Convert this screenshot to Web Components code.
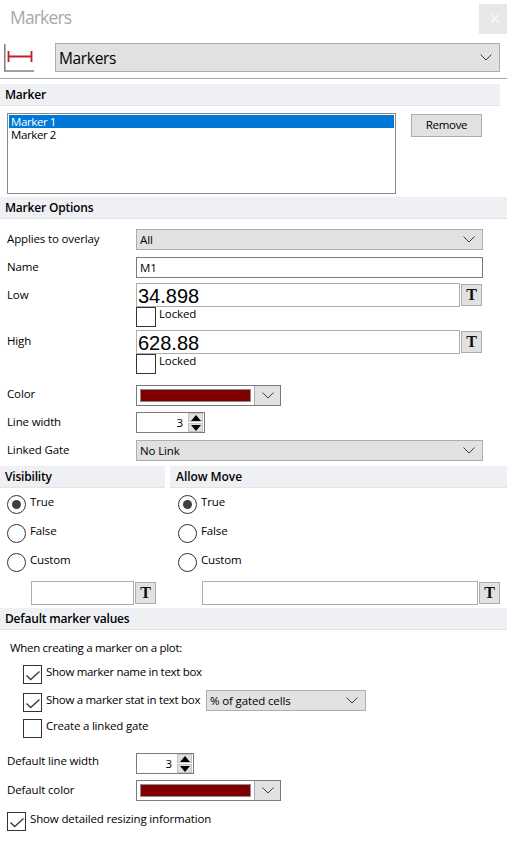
<!DOCTYPE html>
<html>
<head>
<meta charset="utf-8">
<title>Markers</title>
<style>
  html, body { margin: 0; padding: 0; background: #fff; }
  body { font: 11.5px "Open Sans", "Noto Sans", sans-serif; letter-spacing: -0.14px; color: #000; width: 507px; height: 843px; overflow: hidden; }
</style>
</head>
<body>
<markers-panel></markers-panel>

<script>
const chevron = `<svg width="12" height="7" viewBox="0 0 12 7"><path d="M.5 .5 6 6 11.5 .5" fill="none" stroke="#3c3c3c" stroke-width="1"/></svg>`;

class TitleBar extends HTMLElement {
    constructor() {
        super();
        this.attachShadow({ mode: 'open' });
    }
    connectedCallback() {
        this.shadowRoot.innerHTML = `
        <style>
            :host { display: flex; justify-content: space-between; height: 43px; }
            #title { font-size: 17.5px; line-height: 24px; color: #a8a8a8; padding: 5px 0 0 10px; letter-spacing: -0.85px; }
            #close { box-sizing: border-box; width: 28px; height: 30px; padding-left: 4px; margin-top: 4px; background: #e7e7e7; color: #f4f4f4; font: bold 18px/31px "Liberation Sans", sans-serif; text-align: center; }
        </style>
        <div id="title"><slot></slot></div>
        <div id="close">×</div>`;
    }
}

class SectionHead extends HTMLElement {
    constructor() {
        super();
        this.attachShadow({ mode: 'open' });
    }
    connectedCallback() {
        this.shadowRoot.innerHTML = `
        <style>
            :host { display: block; box-sizing: border-box; height: 22px; padding-left: 5px; background: #eff0f4; border-bottom: 1px solid #e3e4e8; font-size: 12px; letter-spacing: -0.2px; font-weight: 600; line-height: 21px; }
        </style>
        <slot></slot>`;
    }
}

class ComboBox extends HTMLElement {
    constructor() {
        super();
        this.attachShadow({ mode: 'open' });
    }
    connectedCallback() {
        this.shadowRoot.innerHTML = `
        <style>
            :host { display: flex; box-sizing: border-box; align-items: center; justify-content: space-between; height: 21px; padding: 0 7px 0 3px; background: #e1e1e1; border: 1px solid #adadad; }
            svg { display: block; }
        </style>
        <span><slot></slot></span>${chevron}`;
    }
}

class TextBox extends HTMLElement {
    constructor() {
        super();
        this.attachShadow({ mode: 'open' });
    }
    connectedCallback() {
        this.shadowRoot.innerHTML = `
        <style>
            :host { display: block; box-sizing: border-box; height: 24px; background: #fff; border: 1px solid #adadad; font: 20px/24px "Liberation Sans", sans-serif; letter-spacing: 0; padding-left: 1px; }
            :host([small]) { height: 21px; border-color: #7a7a7a; font: inherit; line-height: 19px; letter-spacing: inherit; padding-left: 3px; }
        </style>
        <slot></slot>`;
    }
}

class TButton extends HTMLElement {
    constructor() {
        super();
        this.attachShadow({ mode: 'open' });
    }
    connectedCallback() {
        this.shadowRoot.innerHTML = `
        <style>
            :host { display: block; box-sizing: border-box; flex: none; width: 21px; height: 22px; margin: 1px 0 0 1px; background: #e1e1e1; border: 1px solid #adadad; font: bold 16px/20px "Liberation Serif", serif; letter-spacing: 0; text-align: center; color: #111; }
        </style>
        T`;
    }
}

class CheckBox extends HTMLElement {
    constructor() {
        super();
        this.attachShadow({ mode: 'open' });
    }
    connectedCallback() {
        const tick = this.hasAttribute('checked')
            ? `<svg width="19" height="19" viewBox="0 0 19 19"><path d="M3.5 10.5 7.7 14.5 16.5 6.5" fill="none" stroke="#404040" stroke-width="1.5"/></svg>`
            : '';
        this.shadowRoot.innerHTML = `
        <style>
            :host { display: flex; align-items: flex-start; white-space: nowrap; }
            #box { box-sizing: border-box; flex: none; width: 19px; height: 19px; border: 1px solid #333; background: #fff; position: relative; }
            :host([big]) #box { width: 20px; height: 20px; }
            :host([big]) #text { margin-left: 3px; }
            svg { position: absolute; left: -1px; top: -1px; }
            #text { line-height: 13px; margin-left: 4px; }
        </style>
        <div id="box">${tick}</div><div id="text"><slot></slot></div>`;
    }
}

class RadioButton extends HTMLElement {
    constructor() {
        super();
        this.attachShadow({ mode: 'open' });
    }
    connectedCallback() {
        this.shadowRoot.innerHTML = `
        <style>
            :host { display: flex; align-items: flex-start; }
            #ring { box-sizing: border-box; flex: none; width: 19px; height: 19px; border: 1px solid #333; border-radius: 50%; display: flex; align-items: center; justify-content: center; }
            #dot { width: 9px; height: 9px; border-radius: 50%; background: #404040; display: none; }
            :host([checked]) #dot { display: block; }
            #text { line-height: 13px; margin-left: 4px; }
        </style>
        <div id="ring"><div id="dot"></div></div><div id="text"><slot></slot></div>`;
    }
}

class SpinBox extends HTMLElement {
    constructor() {
        super();
        this.attachShadow({ mode: 'open' });
    }
    connectedCallback() {
        this.shadowRoot.innerHTML = `
        <style>
            :host { display: flex; box-sizing: border-box; align-items: center; height: 21px; border: 1px solid #7a7a7a; background: #fff; padding-right: 1px; }
            #value { flex: 1; text-align: right; padding-right: 5px; }
            #arrows { display: flex; flex-direction: column; gap: 1px; width: 15px; }
            .arrow { box-sizing: border-box; height: 9px; background: #e1e1e1; border: 1px solid #c4c4c4; display: flex; align-items: center; justify-content: center; }
            svg { display: block; }
        </style>
        <div id="value"><slot></slot></div>
        <div id="arrows">
            <div class="arrow"><svg width="10" height="6" viewBox="0 0 10 6"><path d="M5 0 10 6H0z"/></svg></div>
            <div class="arrow"><svg width="10" height="6" viewBox="0 0 10 6"><path d="M0 0H10L5 6z"/></svg></div>
        </div>`;
    }
}

class ColorCombo extends HTMLElement {
    constructor() {
        super();
        this.attachShadow({ mode: 'open' });
    }
    connectedCallback() {
        this.shadowRoot.innerHTML = `
        <style>
            :host { display: flex; box-sizing: border-box; width: 145px; height: 21px; border: 1px solid #7a7a7a; background: #fff; }
            #swatch-wrap { flex: 1; padding: 3px; }
            #swatch { box-sizing: border-box; height: 13px; background: #800000; border: 1px solid #8c8c8c; }
            #drop { width: 26px; box-sizing: border-box; background: #e1e1e1; border-left: 1px solid #adadad; display: flex; align-items: center; justify-content: center; }
        </style>
        <div id="swatch-wrap"><div id="swatch"></div></div>
        <div id="drop">${chevron}</div>`;
    }
}

class FormRow extends HTMLElement {
    constructor() {
        super();
        this.attachShadow({ mode: 'open' });
    }
    connectedCallback() {
        const top = this.getAttribute('label-top') || 2;
        this.shadowRoot.innerHTML = `
        <style>
            :host { display: grid; grid-template-columns: 129px 1fr; padding: 0 24px 0 7px; }
            #label { line-height: 16px; padding-top: ${top}px; }
        </style>
        <div id="label">${this.getAttribute('label')}</div>
        <div><slot></slot></div>`;
    }
}

class ValueField extends HTMLElement {
    constructor() {
        super();
        this.attachShadow({ mode: 'open' });
    }
    connectedCallback() {
        this.shadowRoot.innerHTML = `
        <style>
            :host { display: block; }
            #top { display: flex; padding-right: 1px; }
            text-box { flex: 1; }
        </style>
        <div id="top"><text-box>${this.getAttribute('value')}</text-box><t-button></t-button></div>
        <check-box big>Locked</check-box>`;
    }
}

class MarkerList extends HTMLElement {
    constructor() {
        super();
        this.attachShadow({ mode: 'open' });
    }
    connectedCallback() {
        this.shadowRoot.innerHTML = `
        <style>
            :host { display: block; box-sizing: border-box; width: 389px; height: 81px; padding: 1px; border: 1px solid #8a8a8a; background: #fff; letter-spacing: -0.4px; }
            div { height: 13px; line-height: 13px; padding-left: 2px; }
            .sel { background: #0078d7; color: #fff; }
        </style>
        <div class="sel">Marker 1</div>
        <div>Marker 2</div>`;
    }
}

class ToolIcon extends HTMLElement {
    constructor() {
        super();
        this.attachShadow({ mode: 'open' });
    }
    connectedCallback() {
        this.shadowRoot.innerHTML = `
        <style>:host { display: block; flex: none; width: 51px; padding-left: 4px; } svg { display: block; }</style>
        <svg width="30" height="29" viewBox="0 0 30 29">
            <path d="M.75 1V28H30" fill="none" stroke="#808080" stroke-width="1.6"/>
            <path d="M4.5 8V19M4 13.5H28M27.5 8V19" fill="none" stroke="#c0202e" stroke-width="1.8"/>
        </svg>`;
    }
}

class MarkersPanel extends HTMLElement {
    constructor() {
        super();
        this.attachShadow({ mode: 'open' });
    }
    connectedCallback() {
        this.shadowRoot.innerHTML = `
        <style>
            :host { display: block; }
            #tool { display: flex; height: 29px; padding-right: 7px; }
            #tool combo-box { flex: 1; height: 29px; font-size: 15.5px; letter-spacing: -0.35px; }
            #rule { height: 1px; background: #a6a6a6; margin: 6px 0 5px; }
            #marker-head { margin-right: 7px; }
            #marker-row { display: flex; align-items: flex-start; padding: 7px 0 3px 7px; }
            #remove { box-sizing: border-box; width: 71px; height: 23px; margin: 1px 0 0 15px; background: #e1e1e1; border: 1px solid #adadad; text-align: center; line-height: 20px; letter-spacing: -0.3px; }
            .two { display: flex; gap: 5px; margin-top: 5px; }
            .left { width: 165px; flex: none; }
            .right { flex: 1; }
            .right section-head { padding-left: 6px; letter-spacing: -0.05px; }
            .radios { display: flex; flex-direction: column; gap: 10px; padding: 7px 0 0 7px; }
            .right .radios { padding-left: 8px; }
            .custom { display: flex; margin-top: 9px; padding-left: 31px; }
            .right .custom { padding-left: 32px; padding-right: 7px; }
            .custom text-box { flex: 1; }
            .left .custom text-box { flex: none; width: 103px; }
            #when { line-height: 16px; margin: 10px 0 9px 10px; letter-spacing: -0.31px; }
            #checks { display: flex; flex-direction: column; padding-left: 23px; letter-spacing: -0.3px; }
            #stat { display: flex; margin-top: 6px; }
            #stat check-box { width: 183px; margin-top: 3px; }
            #stat combo-box { width: 160px; letter-spacing: -0.14px; }
            #linked { margin-top: 7px; letter-spacing: -0.2px; }
        </style>
        <title-bar>Markers</title-bar>
        <div id="tool"><tool-icon></tool-icon><combo-box>Markers</combo-box></div>
        <div id="rule"></div>
        <section-head id="marker-head">Marker</section-head>
        <div id="marker-row"><marker-list></marker-list><div id="remove">Remove</div></div>

        <section-head>Marker Options</section-head>
        <form-row label="Applies to overlay" style="margin-top:10px"><combo-box>All</combo-box></form-row>
        <form-row label="Name" style="margin-top:7px"><text-box small>M1</text-box></form-row>
        <form-row label="Low" label-top="4" style="margin-top:5px"><value-field value="34.898"></value-field></form-row>
        <form-row label="High" label-top="3" style="margin-top:3px"><value-field value="628.88"></value-field></form-row>
        <form-row label="Color" label-top="1" style="margin-top:11px"><color-combo></color-combo></form-row>
        <form-row label="Line width" style="margin-top:6px"><spin-box style="width:69px">3</spin-box></form-row>
        <form-row label="Linked Gate" style="margin-top:7px"><combo-box>No Link</combo-box></form-row>

        <div class="two">
            <div class="left">
                <section-head>Visibility</section-head>
                <div class="radios">
                    <radio-button checked>True</radio-button>
                    <radio-button>False</radio-button>
                    <radio-button>Custom</radio-button>
                </div>
                <div class="custom"><text-box></text-box><t-button></t-button></div>
            </div>
            <div class="right">
                <section-head>Allow Move</section-head>
                <div class="radios">
                    <radio-button checked>True</radio-button>
                    <radio-button>False</radio-button>
                    <radio-button>Custom</radio-button>
                </div>
                <div class="custom"><text-box></text-box><t-button></t-button></div>
            </div>
        </div>

        <section-head style="margin-top:3px">Default marker values</section-head>
        <div id="when">When creating a marker on a plot:</div>
        <div id="checks">
            <check-box checked>Show marker name in text box</check-box>
            <div id="stat"><check-box checked>Show a marker stat in text box</check-box><combo-box>% of gated cells</combo-box></div>
            <check-box id="linked">Create a linked gate</check-box>
        </div>
        <form-row label="Default line width" label-top="0" style="margin-top:15px"><spin-box style="width:58px">3</spin-box></form-row>
        <form-row label="Default color" style="margin-top:6px"><color-combo></color-combo></form-row>
        <check-box checked style="margin:11px 0 0 7px">Show detailed resizing information</check-box>`;
    }
}

customElements.define('title-bar', TitleBar);
customElements.define('section-head', SectionHead);
customElements.define('combo-box', ComboBox);
customElements.define('text-box', TextBox);
customElements.define('t-button', TButton);
customElements.define('check-box', CheckBox);
customElements.define('radio-button', RadioButton);
customElements.define('spin-box', SpinBox);
customElements.define('color-combo', ColorCombo);
customElements.define('form-row', FormRow);
customElements.define('value-field', ValueField);
customElements.define('marker-list', MarkerList);
customElements.define('tool-icon', ToolIcon);
customElements.define('markers-panel', MarkersPanel);
</script>
</body>
</html>
